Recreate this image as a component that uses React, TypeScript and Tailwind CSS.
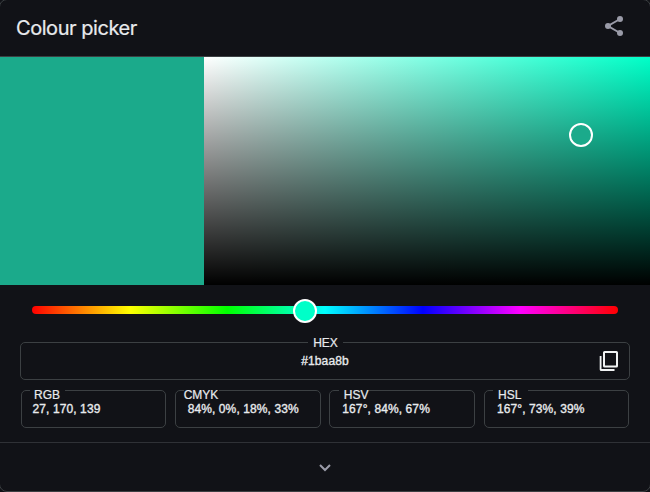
type Format = {
  label: string;
  value: string;
  width: string;
  legend: string;
  inset: string;
};

const formats: Format[] = [
  { label: "RGB", value: "27, 170, 139", width: "w-[145px]", legend: "left-[8px] w-[35px] pl-1", inset: "pl-[10.5px]" },
  { label: "CMYK", value: "84%, 0%, 18%, 33%", width: "w-[146px]", legend: "left-[8px] w-[35px]", inset: "pl-[12px]" },
  { label: "HSV", value: "167°, 84%, 67%", width: "w-[146px]", legend: "left-[9px] w-[30px] pl-[4.5px]", inset: "pl-[12px]" },
  { label: "HSL", value: "167°, 73%, 39%", width: "w-[145px]", legend: "left-[8px] w-[35px] pl-[5px]", inset: "pl-[12px]" },
];

function Header() {
  return (
    <header className="flex h-[57px] items-center justify-between border-b border-[#3c4043] pr-[26px] pl-4">
      <h1 className="font-['Inter',sans-serif] text-[20px] leading-7 tracking-[-0.45px] text-[#e8eaed] [-webkit-text-stroke:0.2px_#e8eaed]">Colour picker</h1>
      <svg width="20" height="22" viewBox="0 0 20 22" className="-mt-1" fill="#9a9ba8" stroke="#9a9ba8">
        <path d="M16 4 4 11l12 7" fill="none" strokeWidth="2" />
        <circle cx="16" cy="4" r="3" stroke="none" />
        <circle cx="4" cy="11" r="3" stroke="none" />
        <circle cx="16" cy="18" r="3" stroke="none" />
      </svg>
    </header>
  );
}

function ColourField() {
  return (
    <div className="flex h-[228px]">
      <div className="w-[204px] bg-[#1baa8b]" />
      <div className="relative flex-1 bg-[linear-gradient(to_top,#000,transparent),linear-gradient(to_right,#fff,#00ffc8)]">
        <div className="absolute top-[66px] left-[365px] size-6 rounded-full border-2 border-white bg-[#1baa8b]" />
      </div>
    </div>
  );
}

function HueSlider() {
  return (
    <div className="px-8 pt-[21px]">
      <div className="relative h-2 rounded-full bg-[linear-gradient(to_right,#f00,#ff0_16.7%,#0f0_33.3%,#0ff_50%,#00f_66.7%,#f0f_83.3%,#f00)]">
        <div className="absolute -top-[7px] left-[261px] size-6 rounded-full border-2 border-white bg-[#00ffc8]" />
      </div>
    </div>
  );
}

export default function App() {
  return (
    <div className="h-[492px] w-[650px] overflow-hidden bg-[#111217]">
      <main className="-mt-px -ml-px flex h-[493px] w-[652px] flex-col overflow-hidden rounded-lg border border-[#3c4043] bg-[#111217] font-['Liberation_Sans',Arial,sans-serif] text-[12px] text-[#e8eaed]">
        <Header />
        <ColourField />
        <HueSlider />
        <section className="relative mx-[20px] mt-[28px] flex h-[38px] items-center justify-center rounded-[5px] border border-[#3c4043]">
          <span className="absolute -top-2 left-[287px] w-[35px] bg-[#111217] text-center leading-4 [-webkit-text-stroke:0.2px_#e8eaed]">HEX</span>
          <span className="leading-4 tracking-[0.1px] [-webkit-text-stroke:0.35px_#e8eaed]">#1baa8b</span>
          <svg width="20" height="22" viewBox="0 0 20 22" className="absolute top-[7px] right-[10px]" fill="none" stroke="#f1f3f4" strokeWidth="2">
            <rect x="5" y="2" width="13" height="14.5" rx="0.6" />
            <path d="M1.6 6v13.4q0 .6.6.6H15.5" strokeWidth="1.8" />
          </svg>
        </section>
        <section className="mx-[21px] mt-[10px] flex justify-between">
          {formats.map((f) => (
            <div key={f.label} className={`relative h-[38px] rounded-[5px] border border-[#3c4043] pt-[10px] ${f.width} ${f.inset}`}>
              <span className={`absolute -top-[4px] bg-[#111217] leading-4 [-webkit-text-stroke:0.2px_#e8eaed] ${f.legend}`}>{f.label}</span>
              <span className="relative block leading-4 tracking-[0.1px] whitespace-nowrap [-webkit-text-stroke:0.35px_#e8eaed]">{f.value}</span>
            </div>
          ))}
        </section>
        <footer className="mt-[14px] flex flex-1 items-center justify-center border-t border-[#2f3136]">
          <svg width="12" height="8" viewBox="0 0 12 8" className="mt-px" fill="none" stroke="#9a9ba8" strokeWidth="2">
            <path d="m1 1 5 5 5-5" />
          </svg>
        </footer>
      </main>
    </div>
  );
}
